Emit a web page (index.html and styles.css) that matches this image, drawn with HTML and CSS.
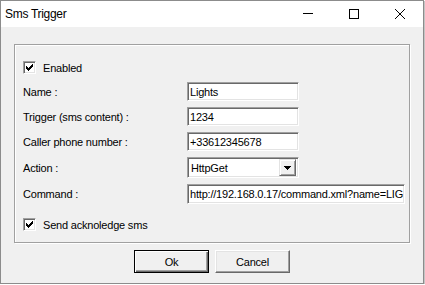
FILE: index.html
```
<!DOCTYPE html>
<html lang="en">
<head>
  <meta charset="UTF-8" />
  <title>Sms Trigger</title>
  <link rel="stylesheet" href="styles.css">
</head>
<body>
  <div class="window">
    <!-- Title bar -->
    <div class="titlebar">
      <span class="title">Sms Trigger</span>
      <div class="caption-buttons">
        <span class="cap-btn">
          <svg width="10" height="10" viewBox="0 0 10 10"><path d="M0 4.5h10" stroke="#000" stroke-width="1"/></svg>
        </span>
        <span class="cap-btn">
          <svg width="10" height="10" viewBox="0 0 10 10"><rect x="0.5" y="0.5" width="9" height="9" fill="none" stroke="#000" stroke-width="1"/></svg>
        </span>
        <span class="cap-btn">
          <svg width="10" height="10" viewBox="0 0 10 10"><path d="M0 0L10 10M10 0L0 10" stroke="#000" stroke-width="1"/></svg>
        </span>
      </div>
    </div>

    <!-- Client area -->
    <div class="client">
      <div class="group">
        <label class="check-row first">
          <span class="check">
            <svg width="11" height="11" viewBox="0 0 11 11" shape-rendering="crispEdges">
              <rect x="2" y="4" width="1" height="3"/><rect x="3" y="5" width="1" height="3"/>
              <rect x="4" y="6" width="1" height="3"/><rect x="5" y="5" width="1" height="3"/>
              <rect x="6" y="4" width="1" height="3"/><rect x="7" y="3" width="1" height="3"/>
              <rect x="8" y="2" width="1" height="3"/>
            </svg>
          </span>
          Enabled
        </label>

        <div class="fields">
          <label>Name :</label>
          <input class="textbox" type="text" value="Lights">

          <label>Trigger (sms content) :</label>
          <input class="textbox" type="text" value="1234">

          <label>Caller phone number :</label>
          <input class="textbox" type="text" value="+33612345678">

          <label>Action :</label>
          <div class="combo">
            <span class="combo-text">HttpGet</span>
            <span class="combo-btn">
              <svg width="7" height="4" viewBox="0 0 7 4" shape-rendering="crispEdges"><path d="M0 0h7L3.5 4z"/></svg>
            </span>
          </div>

          <label>Command :</label>
          <input class="textbox wide" type="text" value="http://192.168.0.17/command.xml?name=LIGHTS">
        </div>

        <label class="check-row last">
          <span class="check">
            <svg width="11" height="11" viewBox="0 0 11 11" shape-rendering="crispEdges">
              <rect x="2" y="4" width="1" height="3"/><rect x="3" y="5" width="1" height="3"/>
              <rect x="4" y="6" width="1" height="3"/><rect x="5" y="5" width="1" height="3"/>
              <rect x="6" y="4" width="1" height="3"/><rect x="7" y="3" width="1" height="3"/>
              <rect x="8" y="2" width="1" height="3"/>
            </svg>
          </span>
          Send acknoledge sms
        </label>
      </div>

      <div class="buttons">
        <button class="btn default" type="button">Ok</button>
        <button class="btn" type="button">Cancel</button>
      </div>
    </div>
  </div>
</body>
</html>
```

FILE: styles.css
```
/* ===== Reset ===== */
* {
  margin: 0;
  padding: 0;
  box-sizing: border-box;
}
body {
  background: #fff;
  font-family: 'Liberation Sans', Arial, sans-serif;
  font-size: 11px;
  letter-spacing: -0.2px;
  color: #000;
}

/* ===== Window frame ===== */
.window {
  width: 424px;
  height: 284px;
  border: 1px solid #8c8c8c;
  box-shadow: 1px 1px 0 #c4c4c4;
  background: #f0f0f0;
}
.titlebar {
  height: 26px;
  background: #fff;
  display: flex;
  align-items: center;
  justify-content: space-between;
}
.title {
  padding-left: 4px;
  font-size: 12px;
  letter-spacing: -0.3px;
}
.caption-buttons {
  display: flex;
  height: 100%;
}
.cap-btn {
  width: 46px;
  height: 100%;
  display: flex;
  align-items: center;
  justify-content: center;
}
.cap-btn svg { display: block; }

/* ===== Client ===== */
.client {
  padding: 17px 0 0 13px;
}
.group {
  width: 396px;
  border: 1px solid #a0a0a0;
  box-shadow: inset 1px 1px 0 #fff, 1px 1px 0 #fff;
  padding: 16px 0 11px 8px;
}
.check-row {
  display: flex;
  align-items: center;
  gap: 7px;
  height: 13px;
}
.check-row.first { margin-bottom: 8px; }
.check-row.last { margin-top: 14px; }
.check {
  width: 13px;
  height: 13px;
  background: #fff;
  border: 1px solid;
  border-color: #a0a0a0 #fff #fff #a0a0a0;
  box-shadow: inset 1px 1px 0 #696969, inset -1px -1px 0 #e3e3e3;
}
.check svg { display: block; }

/* ===== Fields ===== */
.fields {
  display: grid;
  grid-template-columns: 164px auto;
  row-gap: 6px;
  align-items: center;
}
.textbox, .combo {
  font: inherit;
  letter-spacing: inherit;
  color: #000;
  width: 112px;
  height: 19px;
  padding: 0 1px;
  background: #fff;
  border: 1px solid;
  border-color: #a0a0a0 #fff #fff #a0a0a0;
  box-shadow: inset 1px 1px 0 #696969, inset -1px -1px 0 #e3e3e3;
  outline: none;
}
.textbox { padding-left: 2px; }
.textbox.wide {
  width: 218px;
  height: 20px;
}
.combo {
  height: 21px;
  display: flex;
  align-items: center;
  justify-content: space-between;
  padding: 2px 2px 2px 3px;
}
.combo-btn {
  width: 17px;
  height: 17px;
  background: #f0f0f0;
  border: 1px solid;
  border-color: #e3e3e3 #696969 #696969 #e3e3e3;
  box-shadow: inset 1px 1px 0 #fff, inset -1px -1px 0 #a0a0a0;
  display: flex;
  align-items: center;
  justify-content: center;
}
.combo-btn svg { display: block; }

/* ===== Dialog buttons ===== */
.buttons {
  display: flex;
  justify-content: center;
  gap: 6px;
  margin: 7px 0 0 -13px;
}
.btn {
  width: 75px;
  height: 23px;
  font: inherit;
  letter-spacing: inherit;
  color: #000;
  background: #f0f0f0;
  border: 1px solid;
  border-color: #fff #696969 #696969 #fff;
  box-shadow: inset -1px -1px 0 #a0a0a0, inset 1px 1px 0 #e3e3e3;
}
.btn.default {
  border-color: #000;
  box-shadow: inset 1px 1px 0 #fff, inset -1px -1px 0 #696969, inset -2px -2px 0 #a0a0a0;
}
```
